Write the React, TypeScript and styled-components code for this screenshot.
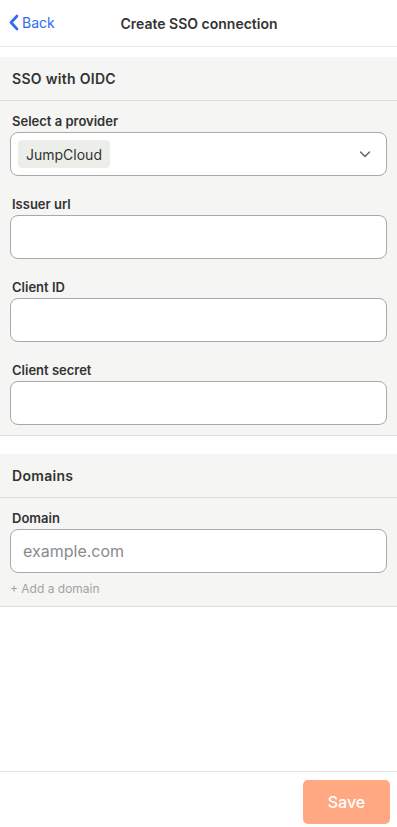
import styled, { createGlobalStyle } from "styled-components";

const GlobalStyle = createGlobalStyle`
  html, body {
    margin: 0;
    padding: 0;
    background: #ffffff;
  }
  body {
    font-family: Inter, "Noto Sans", sans-serif;
    color: #333333;
  }
  * {
    box-sizing: border-box;
  }
`;

const App = () => {
  return (
    <>
      <GlobalStyle />
      <Page>
        <Header>
          <BackLink>
            <svg width="12" height="17" viewBox="0 0 12 17">
              <path d="M9 2 L3 8.5 L9 15" fill="none" stroke="#2f6bf0" strokeWidth="2.6" strokeLinecap="round" strokeLinejoin="round" />
            </svg>
            Back
          </BackLink>
          <Title>Create SSO connection</Title>
        </Header>

        <Section>
          <SectionTitle>SSO with OIDC</SectionTitle>
          <SectionBody>
            <Field>
              <Label>Select a provider</Label>
              <SelectBox>
                <Tag>JumpCloud</Tag>
                <svg width="14" height="14" viewBox="0 0 14 14">
                  <path d="M2.5 5 L7 9.5 L11.5 5" fill="none" stroke="#6b6b6b" strokeWidth="1.6" strokeLinecap="round" strokeLinejoin="round" />
                </svg>
              </SelectBox>
            </Field>
            <Field>
              <Label>Issuer url</Label>
              <Input />
            </Field>
            <Field>
              <Label>Client ID</Label>
              <Input />
            </Field>
            <Field $last>
              <Label>Client secret</Label>
              <Input />
            </Field>
          </SectionBody>
        </Section>

        <Section>
          <SectionTitle>Domains</SectionTitle>
          <SectionBody>
            <Field $last>
              <Label>Domain</Label>
              <Input placeholder="example.com" />
            </Field>
            <AddLink>+ Add a domain</AddLink>
          </SectionBody>
        </Section>

        <Spacer />

        <Footer>
          <SaveButton>Save</SaveButton>
        </Footer>
      </Page>
    </>
  );
};

const Page = styled.div`
  min-height: 100vh;
  display: flex;
  flex-direction: column;
`;

const Header = styled.div`
  height: 47px;
  display: flex;
  align-items: center;
  justify-content: center;
  position: relative;
  border-bottom: 1px solid #e8e8e8;
`;

const BackLink = styled.a`
  position: absolute;
  left: 8px;
  top: 14px;
  display: flex;
  align-items: center;
  gap: 2px;
  color: #2f6bf0;
  font-size: 14px;
  cursor: pointer;
`;

const Title = styled.div`
  font-size: 14px;
  font-weight: 600;
  color: #333333;
  margin-left: 1px;
`;

const Section = styled.div`
  margin-top: 10px;
  background: #f5f5f3;
  border-bottom: 1px solid #dddddd;

  & + & {
    margin-top: 18px;
  }
`;

const SectionTitle = styled.div`
  height: 44px;
  display: flex;
  align-items: center;
  padding: 0 12px;
  font-size: 14px;
  font-weight: 600;
  letter-spacing: 0.3px;
  color: #333333;
  border-bottom: 1px solid #dcdcdc;
`;

const SectionBody = styled.div`
  padding: 12px 10px 10px;
`;

const Field = styled.div<{ $last?: boolean }>`
  display: flex;
  flex-direction: column;
  gap: 2px;
  margin-bottom: ${(p) => (p.$last ? "0" : "20px")};
`;

const Label = styled.label`
  font-size: 13px;
  font-weight: 600;
  line-height: 17px;
  padding-left: 2px;
  color: #333333;
`;

const Input = styled.input`
  height: 44px;
  width: 100%;
  border: 1px solid #a9a9a9;
  border-radius: 8px;
  background: #ffffff;
  padding: 0 12px;
  font-family: Inter, "Noto Sans", sans-serif;
  font-size: 16px;
  color: #333333;
  outline: none;

  &::placeholder {
    color: #8a8a8a;
  }
`;

const SelectBox = styled.div`
  height: 44px;
  border: 1px solid #a9a9a9;
  border-radius: 8px;
  background: #ffffff;
  display: flex;
  align-items: center;
  justify-content: space-between;
  padding: 0 14px 0 7px;
`;

const Tag = styled.span`
  background: #eceeea;
  border-radius: 4px;
  padding: 0 8px;
  height: 28px;
  display: flex;
  align-items: center;
  font-size: 14px;
  color: #333333;
`;

const AddLink = styled.div`
  margin-top: 8px;
  font-size: 12px;
  line-height: 15px;
  color: #a3a3a3;
`;

const Spacer = styled.div`
  flex: 1;
`;

const Footer = styled.div`
  border-top: 1px solid #e3e3e3;
  display: flex;
  justify-content: flex-end;
  padding: 8px 7px 3px;
`;

const SaveButton = styled.button`
  width: 87px;
  height: 44px;
  border: none;
  border-radius: 5px;
  background: #ffa882;
  color: #ffffff;
  font-family: Inter, "Noto Sans", sans-serif;
  font-size: 16px;
  font-weight: 500;
`;

export default App;
